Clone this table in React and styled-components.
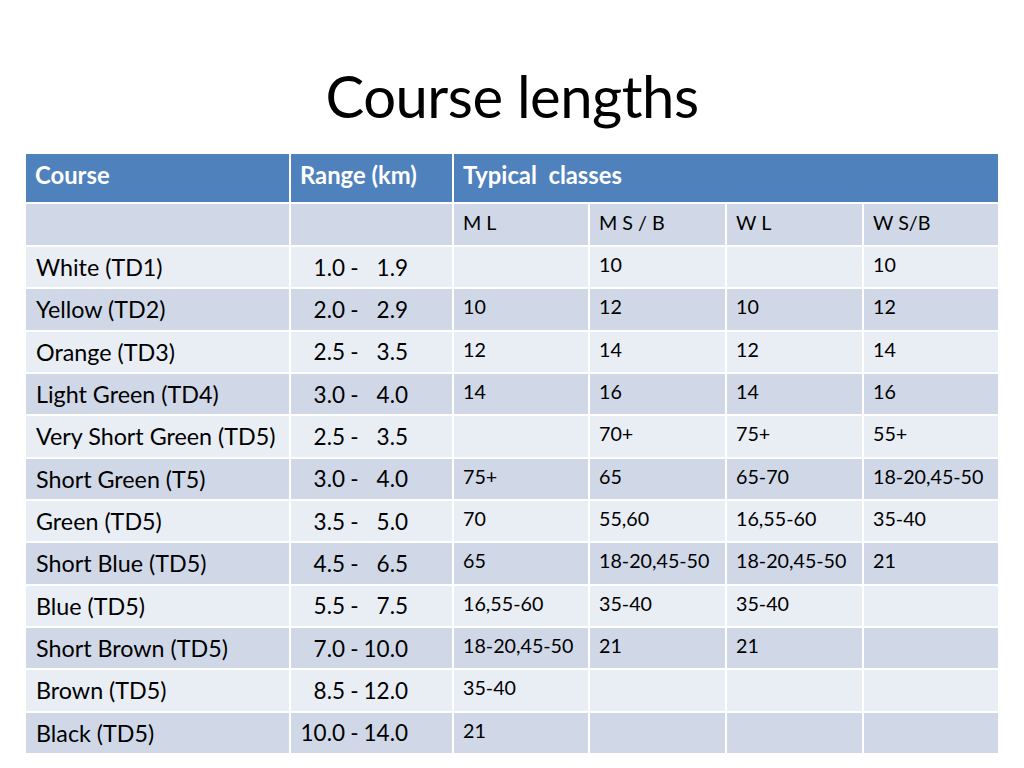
import React from "react";
import styled, { createGlobalStyle } from "styled-components";

const GlobalStyle = createGlobalStyle`
  html, body {
    margin: 0;
    padding: 0;
    background: #ffffff;
  }
  body {
    font-family: "Lato", "Open Sans", sans-serif;
    color: #000000;
  }
`;

const LIGHT = "#e9edf4";
const DARK = "#d0d8e8";

const Slide = styled.div`
  width: 1024px;
  height: 768px;
  box-sizing: border-box;
  padding: 60px 26px 0 26px;
  display: flex;
  flex-direction: column;
  overflow: hidden;
`;

const Title = styled.h1`
  margin: 0 0 22px 0;
  height: 72px;
  font-size: 58px;
  font-weight: 400;
  line-height: 72px;
  text-align: center;
  letter-spacing: -0.5px;
`;

const Grid = styled.div`
  display: grid;
  grid-template-columns: 263px 161px 134px 135px 135px 134px;
  grid-template-rows: 48px 41px repeat(12, 40.33px);
  gap: 2px;
  width: 972px;
`;

const HeadCell = styled.div`
  grid-column: ${(p) => p.$span || "auto"};
  background: #4f81bd;
  color: #ffffff;
  font-weight: 700;
  font-size: 23.8px;
  display: flex;
  align-items: center;
  padding: 0 10px 6px 9px;
  white-space: nowrap;
`;

const Cell = styled.div`
  background: ${(p) => (p.$dark ? DARK : LIGHT)};
  display: flex;
  align-items: center;
  padding: 0 10px;
  white-space: nowrap;
  overflow: visible;
`;

const CourseCell = styled(Cell)`
  font-size: 23.3px;
`;

const RangeCell = styled(Cell)`
  font-size: 22.5px;
`;

const ClassCell = styled(Cell)`
  font-size: 19.7px;
  padding-bottom: 5px;
  padding-left: 9px;
`;

const Num = styled.span`
  display: flex;
  justify-content: flex-end;
  width: ${(p) => p.$w}px;
  flex: none;
`;

const Dash = styled.span`
  display: flex;
  justify-content: center;
  width: 19px;
  flex: none;
`;

const subHeads = ["M L", "M S / B", "W L", "W S/B"];

const rows = [
  ["White (TD1)", "1.0", "1.9", "", "10", "", "10"],
  ["Yellow (TD2)", "2.0", "2.9", "10", "12", "10", "12"],
  ["Orange (TD3)", "2.5", "3.5", "12", "14", "12", "14"],
  ["Light Green (TD4)", "3.0", "4.0", "14", "16", "14", "16"],
  ["Very Short Green (TD5)", "2.5", "3.5", "", "70+", "75+", "55+"],
  ["Short Green (T5)", "3.0", "4.0", "75+", "65", "65-70", "18-20,45-50"],
  ["Green (TD5)", "3.5", "5.0", "70", "55,60", "16,55-60", "35-40"],
  ["Short Blue (TD5)", "4.5", "6.5", "65", "18-20,45-50", "18-20,45-50", "21"],
  ["Blue (TD5)", "5.5", "7.5", "16,55-60", "35-40", "35-40", ""],
  ["Short Brown (TD5)", "7.0", "10.0", "18-20,45-50", "21", "21", ""],
  ["Brown (TD5)", "8.5", "12.0", "35-40", "", "", ""],
  ["Black (TD5)", "10.0", "14.0", "21", "", "", ""],
];

const App = () => {
  return (
    <>
      <GlobalStyle />
      <Slide>
        <Title>Course lengths</Title>
        <Grid>
          <HeadCell>Course</HeadCell>
          <HeadCell>Range (km)</HeadCell>
          <HeadCell $span="span 4">Typical&nbsp; classes</HeadCell>

          <Cell $dark />
          <Cell $dark />
          {subHeads.map((h) => (
            <ClassCell $dark key={h}>{h}</ClassCell>
          ))}

          {rows.map(([name, from, to, ...classes], i) => {
            const dark = i % 2 === 1;
            return (
              <React.Fragment key={name}>
                <CourseCell $dark={dark}>{name}</CourseCell>
                <RangeCell $dark={dark}>
                  <Num $w={44}>{from}</Num>
                  <Dash>-</Dash>
                  <Num $w={44}>{to}</Num>
                </RangeCell>
                {classes.map((c, j) => (
                  <ClassCell $dark={dark} key={j}>{c}</ClassCell>
                ))}
              </React.Fragment>
            );
          })}
        </Grid>
      </Slide>
    </>
  );
};

export default App;
